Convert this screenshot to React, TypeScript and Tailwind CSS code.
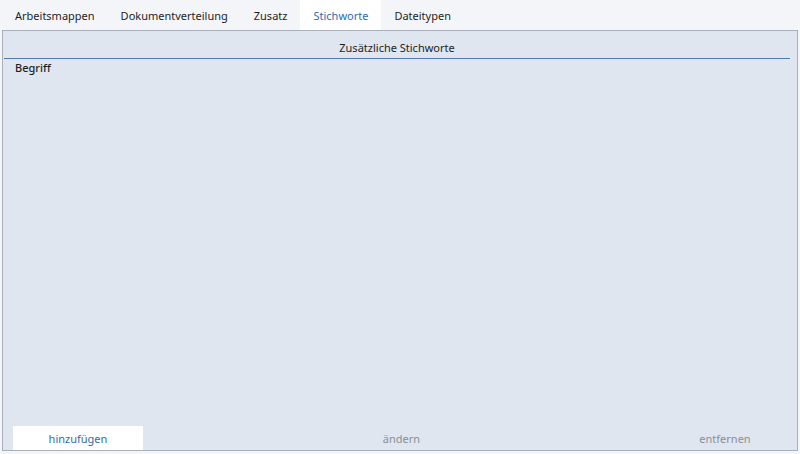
const tabs = ["Arbeitsmappen", "Dokumentverteilung", "Zusatz", "Stichworte", "Dateitypen"];

export default function App() {
  return (
    <div
      className="w-[800px] h-[454px] bg-[#f3f5f9] flex flex-col text-[11px] text-[#1e1e1e]"
      style={{ fontFamily: '"Noto Sans", "Open Sans", sans-serif' }}
    >
      <div className="flex h-[30px] pl-[2px] items-stretch">
        {tabs.map((t) => (
          <div
            key={t}
            className={
              t === "Stichworte"
                ? "px-[13px] pt-[2px] flex items-center bg-white text-[#2e6bb0]"
                : "px-[13px] pt-[2px] flex items-center"
            }
          >
            {t}
          </div>
        ))}
      </div>
      <div className="mx-[2px] mb-[3px] flex-1 border border-[#a9b0bb] bg-[#dfe6f0] flex flex-col">
        <div className="h-[28px] flex items-end justify-center pb-[2px] ml-[1px] mr-[7px] border-b border-[#4f7cb0]">
          Zusätzliche Stichworte
        </div>
        <div className="pl-[12px] pt-[1px] font-medium">Begriff</div>
        <div className="flex-1" />
        <div className="flex items-stretch justify-between h-[24px] pl-[10px] pr-[7px]">
          <div className="w-[130px] bg-white text-[#2e6bb0] flex items-center justify-center pt-[3px]">
            hinzufügen
          </div>
          <div className="w-[130px] flex items-center justify-center pt-[3px] text-[#8a8f96]">ändern</div>
          <div className="w-[130px] flex items-center justify-center pt-[3px] text-[#8a8f96]">entfernen</div>
        </div>
      </div>
    </div>
  );
}
